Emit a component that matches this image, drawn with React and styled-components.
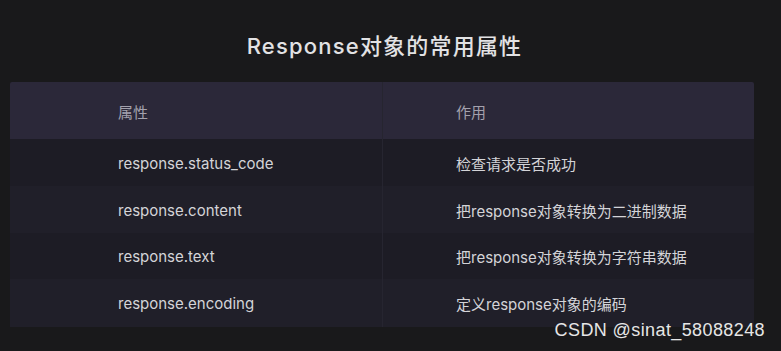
import styled, { createGlobalStyle } from 'styled-components'

const GlobalStyle = createGlobalStyle`
  body {
    margin: 0;
    background: #19191b;
    font-family: Inter, "Noto Sans CJK SC", sans-serif;
  }
`

const Page = styled.div`
  position: relative;
  width: 781px;
  height: 351px;
  background: #19191b;
  overflow: hidden;
`

const Title = styled.h1`
  margin: 0;
  height: 82px;
  display: flex;
  align-items: center;
  justify-content: center;
  padding-right: 12px;
  padding-top: 6px;
  box-sizing: border-box;
  font-size: 22px;
  font-weight: 500;
  color: #e2e2e4;
  font-family: Inter, "Noto Sans CJK SC", sans-serif;
  letter-spacing: 1.2px;
`

const Table = styled.div`
  margin-left: 10px;
  width: 744px;
  display: grid;
  grid-template-columns: 372px 372px;
`

const Cell = styled.div`
  height: ${p => p.h}px;
  display: flex;
  align-items: center;
  padding-left: ${p => (p.col === 0 ? 108 : 73)}px;
  padding-top: 1px;
  box-sizing: border-box;
  font-size: 15px;
  color: ${p => (p.head ? '#a3a1ad' : '#d4d4d8')};
  background: ${p => p.bg};
  border-left: ${p => (p.col === 1 ? '1px solid #262530' : 'none')};
  border-radius: ${p =>
    p.head ? (p.col === 0 ? '2px 0 0 0' : '0 2px 0 0') : '0'};
`

const Watermark = styled.div`
  position: absolute;
  right: 16px;
  bottom: 10px;
  font-family: "Liberation Sans", Arial, sans-serif;
  font-size: 18px;
  color: #e6e6e6;
  letter-spacing: 0.4px;
`

const rows = [
  ['response.status_code', '检查请求是否成功'],
  ['response.content', '把response对象转换为二进制数据'],
  ['response.text', '把response对象转换为字符串数据'],
  ['response.encoding', '定义response对象的编码'],
]

const heights = [47, 47, 46, 48]
const bgs = ['#1d1c25', '#201f29', '#1d1c25', '#201f29']

export default function App() {
  return (
    <Page>
      <GlobalStyle />
      <Title>Response对象的常用属性</Title>
      <Table>
        <Cell head col={0} h={57} bg="#2b2839">属性</Cell>
        <Cell head col={1} h={57} bg="#2b2839">作用</Cell>
        {rows.map((r, i) => [
          <Cell key={i + 'a'} col={0} h={heights[i]} bg={bgs[i]}>{r[0]}</Cell>,
          <Cell key={i + 'b'} col={1} h={heights[i]} bg={bgs[i]}>{r[1]}</Cell>,
        ])}
      </Table>
      <Watermark>CSDN @sinat_58088248</Watermark>
    </Page>
  )
}
